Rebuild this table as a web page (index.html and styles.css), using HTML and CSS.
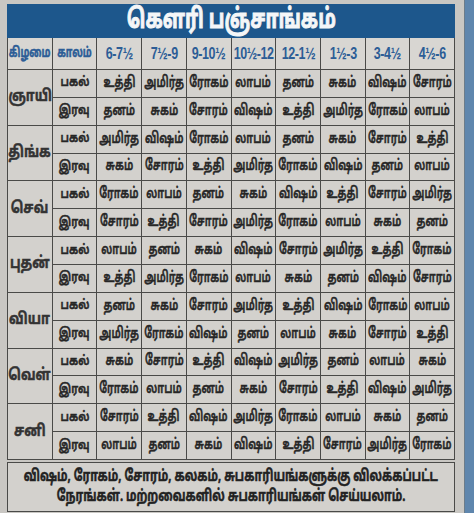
FILE: index.html
```html
<!DOCTYPE html>
<html lang="ta">
<head>
<meta charset="utf-8">
<title>கௌரி பஞ்சாங்கம்</title>
<link rel="stylesheet" href="styles.css">
</head>
<body>
<div class="page">
  <div class="sheet">
    <div class="banner"><span>கௌரி பஞ்சாங்கம்</span></div>
    <div class="grid">
      <div class="hd"><span>கிழமை</span></div><div class="hd"><span>காலம்</span></div>
      <div class="hd num"><span>6-7½</span></div><div class="hd num"><span>7½-9</span></div><div class="hd num"><span>9-10½</span></div><div class="hd num"><span>10½-12</span></div><div class="hd num"><span>12-1½</span></div><div class="hd num"><span>1½-3</span></div><div class="hd num"><span>3-4½</span></div><div class="hd num"><span>4½-6</span></div>

      <div class="day"><span>ஞாயி</span></div>
      <div class="k"><span>பகல்</span></div><div><span>உத்தி</span></div><div><span>அமிர்த</span></div><div><span>ரோகம்</span></div><div><span>லாபம்</span></div><div><span>தனம்</span></div><div><span>சுகம்</span></div><div><span>விஷம்</span></div><div><span>சோரம்</span></div>
      <div class="k"><span>இரவு</span></div><div><span>தனம்</span></div><div><span>சுகம்</span></div><div><span>சோரம்</span></div><div><span>விஷம்</span></div><div><span>உத்தி</span></div><div><span>அமிர்த</span></div><div><span>ரோகம்</span></div><div><span>லாபம்</span></div>

      <div class="day"><span>திங்க</span></div>
      <div class="k"><span>பகல்</span></div><div><span>அமிர்த</span></div><div><span>விஷம்</span></div><div><span>ரோகம்</span></div><div><span>லாபம்</span></div><div><span>தனம்</span></div><div><span>சுகம்</span></div><div><span>சோரம்</span></div><div><span>உத்தி</span></div>
      <div class="k"><span>இரவு</span></div><div><span>சுகம்</span></div><div><span>சோரம்</span></div><div><span>உத்தி</span></div><div><span>அமிர்த</span></div><div><span>ரோகம்</span></div><div><span>விஷம்</span></div><div><span>தனம்</span></div><div><span>லாபம்</span></div>

      <div class="day"><span>செவ்</span></div>
      <div class="k"><span>பகல்</span></div><div><span>ரோகம்</span></div><div><span>லாபம்</span></div><div><span>தனம்</span></div><div><span>சுகம்</span></div><div><span>விஷம்</span></div><div><span>உத்தி</span></div><div><span>சோரம்</span></div><div><span>அமிர்த</span></div>
      <div class="k"><span>இரவு</span></div><div><span>சோரம்</span></div><div><span>உத்தி</span></div><div><span>சோரம்</span></div><div><span>அமிர்த</span></div><div><span>ரோகம்</span></div><div><span>லாபம்</span></div><div><span>சுகம்</span></div><div><span>தனம்</span></div>

      <div class="day"><span>புதன்</span></div>
      <div class="k"><span>பகல்</span></div><div><span>லாபம்</span></div><div><span>தனம்</span></div><div><span>சுகம்</span></div><div><span>விஷம்</span></div><div><span>சோரம்</span></div><div><span>அமிர்த</span></div><div><span>உத்தி</span></div><div><span>ரோகம்</span></div>
      <div class="k"><span>இரவு</span></div><div><span>உத்தி</span></div><div><span>அமிர்த</span></div><div><span>ரோகம்</span></div><div><span>லாபம்</span></div><div><span>சுகம்</span></div><div><span>தனம்</span></div><div><span>விஷம்</span></div><div><span>சோரம்</span></div>

      <div class="day"><span>வியா</span></div>
      <div class="k"><span>பகல்</span></div><div><span>தனம்</span></div><div><span>சுகம்</span></div><div><span>சோரம்</span></div><div><span>அமிர்த</span></div><div><span>உத்தி</span></div><div><span>விஷம்</span></div><div><span>ரோகம்</span></div><div><span>லாபம்</span></div>
      <div class="k"><span>இரவு</span></div><div><span>அமிர்த</span></div><div><span>ரோகம்</span></div><div><span>விஷம்</span></div><div><span>தனம்</span></div><div><span>லாபம்</span></div><div><span>சுகம்</span></div><div><span>சோரம்</span></div><div><span>உத்தி</span></div>

      <div class="day"><span>வெள்</span></div>
      <div class="k"><span>பகல்</span></div><div><span>சுகம்</span></div><div><span>சோரம்</span></div><div><span>உத்தி</span></div><div><span>விஷம்</span></div><div><span>அமிர்த</span></div><div><span>தனம்</span></div><div><span>லாபம்</span></div><div><span>சுகம்</span></div>
      <div class="k"><span>இரவு</span></div><div><span>ரோகம்</span></div><div><span>லாபம்</span></div><div><span>தனம்</span></div><div><span>சுகம்</span></div><div><span>சோரம்</span></div><div><span>உத்தி</span></div><div><span>விஷம்</span></div><div><span>அமிர்த</span></div>

      <div class="day"><span>சனி</span></div>
      <div class="k"><span>பகல்</span></div><div><span>சோரம்</span></div><div><span>உத்தி</span></div><div><span>விஷம்</span></div><div><span>அமிர்த</span></div><div><span>ரோகம்</span></div><div><span>லாபம்</span></div><div><span>சுகம்</span></div><div><span>தனம்</span></div>
      <div class="k"><span>இரவு</span></div><div><span>லாபம்</span></div><div><span>தனம்</span></div><div><span>சுகம்</span></div><div><span>விஷம்</span></div><div><span>உத்தி</span></div><div><span>சோரம்</span></div><div><span>அமிர்த</span></div><div><span>ரோகம்</span></div>
    </div>
    <div class="note">
      <span class="line">விஷம், ரோகம், சோரம், கலகம், சுபகாரியங்களுக்கு விலக்கப்பட்ட</span>
      <span class="line">நேரங்கள். மற்றவைகளில் சுபகாரியங்கள் செய்யலாம்.</span>
    </div>
  </div>
  <div class="stripe"></div>
</div>
</body>
</html>
```

FILE: styles.css
```css
html, body {
  margin: 0;
  padding: 0;
}
body {
  background: #c9c7c3;
  font-family: "Noto Sans Tamil", "Lohit Tamil", "Noto Sans", sans-serif;
  color: #262626;
}
.page {
  display: flex;
  height: 513px;
  overflow: hidden;
}
.sheet {
  width: 448px;
  margin: 4px 0 0 7px;
  display: flex;
  flex-direction: column;
}
.stripe {
  margin-left: 9px;
  width: 2px;
  background: #6b7c8a;
  border-right: 9px solid #5f86ad;
}
.banner {
  height: 34px;
  background: #1d578c;
  display: flex;
  align-items: center;
  justify-content: center;
}
.banner span {
  display: inline-block;
  color: #f4f6f8;
  font-size: 27px;
  font-weight: 700;
  white-space: nowrap;
  transform: scaleX(0.7);
  -webkit-text-stroke: 1px #f4f6f8;
  text-shadow: 0 0 1px #0e3a63;
}
.grid {
  display: grid;
  grid-template-columns: repeat(10, 1fr);
  grid-template-rows: 31px repeat(14, 1fr);
  height: 421px;
  gap: 1px;
  background: #4a4a48;
  border: 1px solid #4a4a48;
  border-top: 0;
}
.grid > div {
  background: #d3d1cd;
  display: flex;
  align-items: center;
  justify-content: center;
  font-size: 15px;
  font-weight: 600;
  white-space: nowrap;
  min-width: 0;
}
.grid span {
  display: inline-block;
  transform: scaleX(0.68);
  -webkit-text-stroke: 0.5px currentColor;
}
.grid > .hd {
  background: #d8d6d2;
  color: #2c5d96;
  font-size: 14px;
  font-weight: 700;
}
.grid > .hd.num {
  font-family: "Liberation Sans", sans-serif;
  font-size: 16px;
  letter-spacing: -0.5px;
}
.grid > .hd.num span {
  transform: scaleX(0.78);
  -webkit-text-stroke: 0;
}
.grid > .day {
  grid-row: span 2;
  font-size: 16px;
  font-weight: 700;
  color: #333;
}
.grid > .day span {
  transform: scaleX(0.8);
}
.grid > .k {
  font-size: 13px;
}
.grid > .k span {
  transform: scaleX(0.8);
}
.note {
  margin-top: 2px;
  height: 48px;
  border: 1px solid #4a4a48;
  background: #d3d1cd;
  display: flex;
  flex-direction: column;
  align-items: center;
  justify-content: center;
  color: #222;
}
.note .line {
  display: block;
  white-space: nowrap;
  font-size: 16px;
  font-weight: 700;
  line-height: 20px;
  transform: scaleX(0.7);
  -webkit-text-stroke: 0.5px currentColor;
}
```
